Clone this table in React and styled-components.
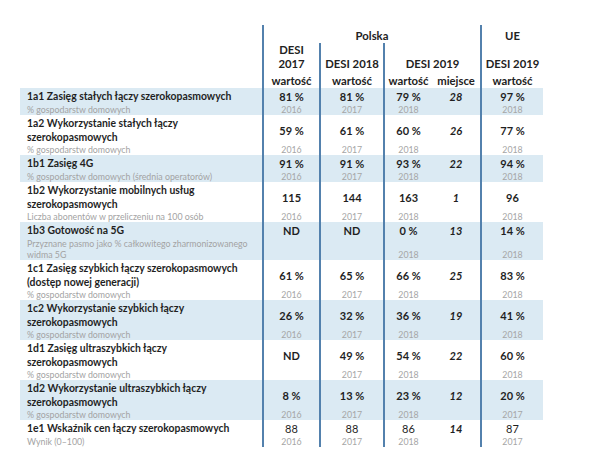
import React from "react";
import styled, { createGlobalStyle, css } from "styled-components";

const GlobalStyle = createGlobalStyle`
  html, body { margin: 0; padding: 0; background: #ffffff; }
  body { font-family: "Lato", "Liberation Sans", sans-serif; color: #1f1f1f; }
`;

const COLS = "242px 57px 64px 49px 48px 63px";
const LINE = "#5381ad";
const BAND = "#dbeaf3";

const Page = styled.div`
  padding: 25px 0 0 20px;
  width: 523px;
`;

const HeaderGrid = styled.div`
  display: grid;
  grid-template-columns: ${COLS};
  grid-template-rows: 18px 28px 17px;
`;

const HeadCell = styled.div`
  grid-column: ${(p) => p.$col};
  grid-row: ${(p) => p.$row};
  display: flex;
  justify-content: center;
  align-items: ${(p) => p.$align || "flex-end"};
  text-align: center;
  font-weight: 700;
  font-size: 11.3px;
  line-height: 14px;
  color: #222;
  ${(p) => p.$line && css`border-left: 2px solid ${LINE};`}
`;

const DataRow = styled.div`
  display: grid;
  grid-template-columns: ${COLS};
  grid-template-rows: auto auto;
  background: ${(p) => (p.$band ? BAND : "transparent")};
`;

const Title = styled.div`
  grid-column: 1;
  grid-row: 1;
  padding: 2px 4px 0 7px;
  font-weight: 700;
  font-size: 10.4px;
  line-height: 13.5px;
  color: #1f1f1f;
`;

const Sub = styled.div`
  grid-column: 1;
  grid-row: 2;
  padding: 0 4px 0 7px;
  font-size: 8.8px;
  line-height: 11px;
  color: #a3a3a3;
`;

const ValueCell = styled.div`
  grid-column: ${(p) => p.$col};
  grid-row: 1;
  padding-top: 2px;
  display: flex;
  align-items: center;
  justify-content: center;
  font-size: 11px;
  line-height: 14px;
  font-weight: ${(p) => (p.$light ? 400 : 700)};
  font-style: ${(p) => (p.$italic ? "italic" : "normal")};
  color: #1f1f1f;
  ${(p) => p.$line && css`border-left: 2px solid ${LINE};`}
`;

const YearCell = styled.div`
  grid-column: ${(p) => p.$col};
  grid-row: 2;
  display: flex;
  align-items: flex-end;
  justify-content: center;
  font-size: 8.8px;
  line-height: 11px;
  color: #a6a6a6;
  ${(p) => p.$line && css`border-left: 2px solid ${LINE};`}
`;

const rows = [
  {
    title: "1a1 Zasięg stałych łączy szerokopasmowych",
    sub: "% gospodarstw domowych",
    v: ["81 %", "81 %", "79 %", "28", "97 %"],
    y: ["2016", "2017", "2018", "", "2018"],
    band: true,
  },
  {
    title: "1a2 Wykorzystanie stałych łączy szerokopasmowych",
    sub: "% gospodarstw domowych",
    v: ["59 %", "61 %", "60 %", "26", "77 %"],
    y: ["2016", "2017", "2018", "", "2018"],
  },
  {
    title: "1b1 Zasięg 4G",
    sub: "% gospodarstw domowych (średnia operatorów)",
    v: ["91 %", "91 %", "93 %", "22", "94 %"],
    y: ["2016", "2017", "2018", "", "2018"],
    band: true,
  },
  {
    title: "1b2 Wykorzystanie mobilnych usług szerokopasmowych",
    sub: "Liczba abonentów w przeliczeniu na 100 osób",
    v: ["115", "144", "163", "1", "96"],
    y: ["2016", "2017", "2018", "", "2018"],
  },
  {
    title: "1b3 Gotowość na 5G",
    sub: "Przyznane pasmo jako % całkowitego zharmonizowanego widma 5G",
    v: ["ND", "ND", "0 %", "13", "14 %"],
    y: ["", "", "2018", "", "2018"],
    band: true,
  },
  {
    title: "1c1 Zasięg szybkich łączy szerokopasmowych (dostęp nowej generacji)",
    sub: "% gospodarstw domowych",
    v: ["61 %", "65 %", "66 %", "25", "83 %"],
    y: ["2016", "2017", "2018", "", "2018"],
  },
  {
    title: "1c2 Wykorzystanie szybkich łączy szerokopasmowych",
    sub: "% gospodarstw domowych",
    v: ["26 %", "32 %", "36 %", "19", "41 %"],
    y: ["2016", "2017", "2018", "", "2018"],
    band: true,
  },
  {
    title: "1d1 Zasięg ultraszybkich łączy szerokopasmowych",
    sub: "% gospodarstw domowych",
    v: ["ND", "49 %", "54 %", "22", "60 %"],
    y: ["", "2017", "2018", "", "2018"],
  },
  {
    title: "1d2 Wykorzystanie ultraszybkich łączy szerokopasmowych",
    sub: "% gospodarstw domowych",
    v: ["8 %", "13 %", "23 %", "12", "20 %"],
    y: ["2016", "2017", "2018", "", "2017"],
    band: true,
  },
  {
    title: "1e1 Wskaźnik cen łączy szerokopasmowych",
    sub: "Wynik (0–100)",
    v: ["88", "88", "86", "14", "87"],
    y: ["2016", "2017", "2018", "", "2017"],
    light: true,
  },
];

const lineCols = [true, true, true, false, true];

export default function App() {
  return (
    <>
      <GlobalStyle />
      <Page>
        <HeaderGrid>
          <HeadCell $col="2 / 6" $row="1" $line>Polska</HeadCell>
          <HeadCell $col="6" $row="1" $line>UE</HeadCell>
          <HeadCell $col="2" $row="2" $line>DESI<br />2017</HeadCell>
          <HeadCell $col="3" $row="2" $line>DESI 2018</HeadCell>
          <HeadCell $col="4 / 6" $row="2" $line>DESI 2019</HeadCell>
          <HeadCell $col="6" $row="2" $line>DESI 2019</HeadCell>
          <HeadCell $col="2" $row="3" $line>wartość</HeadCell>
          <HeadCell $col="3" $row="3" $line>wartość</HeadCell>
          <HeadCell $col="4" $row="3" $line>wartość</HeadCell>
          <HeadCell $col="5" $row="3">miejsce</HeadCell>
          <HeadCell $col="6" $row="3" $line>wartość</HeadCell>
        </HeaderGrid>
        {rows.map((r) => (
          <DataRow key={r.title} $band={r.band}>
            <Title>{r.title}</Title>
            <Sub>{r.sub}</Sub>
            {r.v.map((val, i) => (
              <ValueCell
                key={"v" + i}
                $col={i + 2}
                $line={lineCols[i]}
                $italic={i === 3}
                $light={r.light && i !== 3}
              >
                {val}
              </ValueCell>
            ))}
            {r.y.map((yr, i) => (
              <YearCell key={"y" + i} $col={i + 2} $line={lineCols[i]}>
                {yr}
              </YearCell>
            ))}
          </DataRow>
        ))}
      </Page>
    </>
  );
}
